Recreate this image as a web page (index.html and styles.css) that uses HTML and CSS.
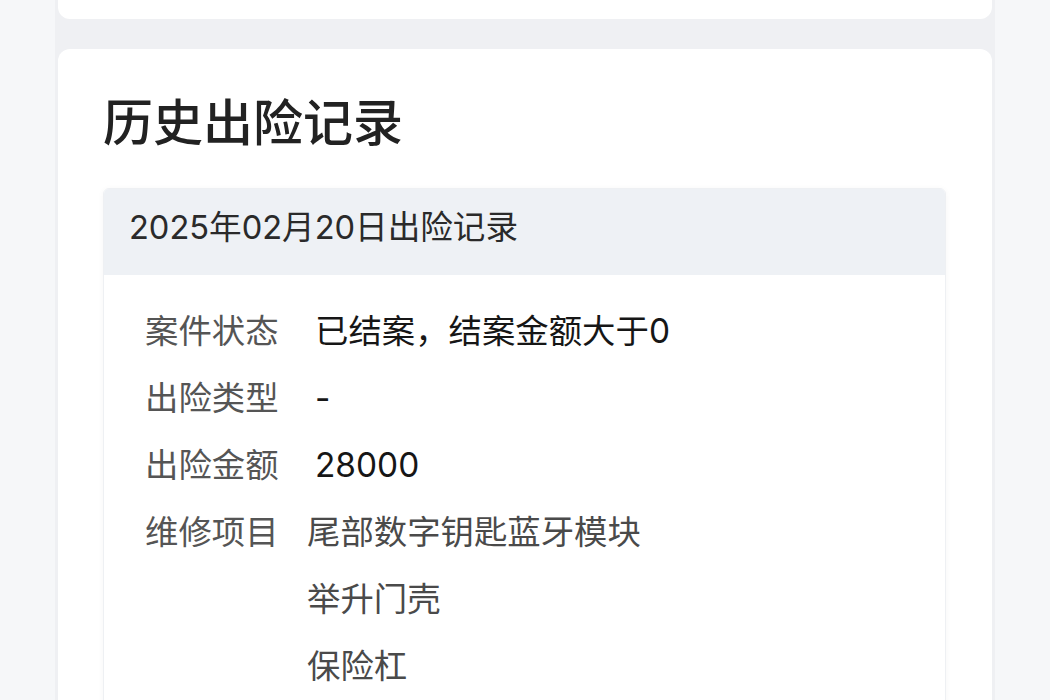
FILE: index.html
```html
<!DOCTYPE html>
<html lang="zh-CN">

<head>
    <meta charset="UTF-8">
    <title>历史出险记录</title>
    <link rel="stylesheet" href="styles.css">
</head>

<body>
    <div class="page">
        <div class="card card-prev"></div>

        <section class="card history">
            <h2 class="history-title">历史出险记录</h2>

            <div class="record">
                <div class="record-head">2025年02月20日出险记录</div>
                <div class="record-body">
                    <div class="row">
                        <span class="label">案件状态</span>
                        <span class="value strong">已结案，结案金额大于0</span>
                    </div>
                    <div class="row">
                        <span class="label">出险类型</span>
                        <span class="value strong">-</span>
                    </div>
                    <div class="row">
                        <span class="label">出险金额</span>
                        <span class="value strong">28000</span>
                    </div>
                    <div class="row">
                        <span class="label">维修项目</span>
                        <div class="value items">
                            <div>尾部数字钥匙蓝牙模块</div>
                            <div>举升门壳</div>
                            <div>保险杠</div>
                        </div>
                    </div>
                </div>
            </div>
        </section>
    </div>
</body>

</html>
```

FILE: styles.css
```css
body {
    margin: 0;
    background: #f6f7f9;
    font-family: "Inter", "Noto Sans CJK SC", sans-serif;
    color: #1a1a1a;
}

.page {
    width: 934px;
    margin: 0 auto;
    padding: 0 3px;
    background: #eff0f3;
    display: flex;
    flex-direction: column;
    gap: 30px;
}

.card {
    background: #fff;
    border-radius: 12px;
}

.card-prev {
    height: 19px;
    border-radius: 0 0 12px 12px;
}

.history {
    padding: 44px 46px 40px 45px;
}

.history-title {
    margin: 0 0 35px 0;
    font-size: 50px;
    line-height: 60px;
    font-weight: 500;
    color: #222;
}

.record {
    border: 1px solid #eef0f3;
    border-radius: 6px;
    box-shadow: 0 1px 6px rgba(0, 0, 0, 0.04);
    overflow: hidden;
}

.record-head {
    height: 76px;
    line-height: 76px;
    padding: 0 0 10px 25px;
    background: #eef1f5;
    font-size: 32.6px;
    color: #2a2a2a;
}

.record-body {
    padding: 23px 0 40px 41px;
    font-size: 33.4px;
    line-height: 67px;
}

.row {
    display: flex;
}

.label {
    width: 162px;
    flex-shrink: 0;
    color: #555;
}

.value.strong {
    padding-left: 8px;
    color: #161616;
}

.value.items {
    color: #4a4a4a;
}
```
